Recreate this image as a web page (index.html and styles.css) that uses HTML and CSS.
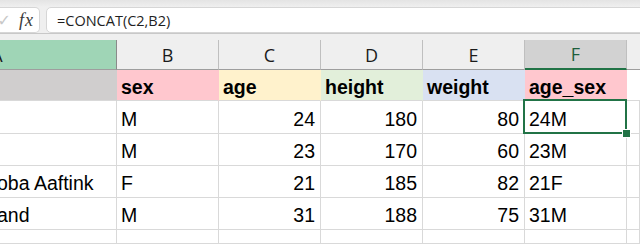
FILE: index.html
```html
<!DOCTYPE html>
<html lang="en">
<head>
    <meta charset="UTF-8">
    <title>Sheet - CONCAT</title>
    <link rel="stylesheet" href="styles.css">
</head>
<body>
    <div class="formula-bar">
        <div class="fx-box">
            <span class="check">&#10003;</span>
            <span class="fx">fx</span>
        </div>
        <div class="formula-input">=CONCAT(C2,B2)</div>
    </div>

    <div class="col-heads">
        <div class="col-head col-a">A</div>
        <div class="col-head">B</div>
        <div class="col-head">C</div>
        <div class="col-head">D</div>
        <div class="col-head">E</div>
        <div class="col-head selected">F</div>
        <div class="col-head last"></div>
    </div>

    <div class="grid">
        <!-- row 1: headings -->
        <div class="cell head fill-gray"></div>
        <div class="cell head fill-pink">sex</div>
        <div class="cell head fill-yellow">age</div>
        <div class="cell head fill-green">height</div>
        <div class="cell head fill-blue">weight</div>
        <div class="cell head fill-pink">age_sex</div>
        <div class="cell head blank"></div>

        <!-- row 2 -->
        <div class="cell name"></div>
        <div class="cell">M</div>
        <div class="cell num">24</div>
        <div class="cell num">180</div>
        <div class="cell num">80</div>
        <div class="cell active">24M</div>
        <div class="cell"></div>

        <!-- row 3 -->
        <div class="cell name"></div>
        <div class="cell">M</div>
        <div class="cell num">23</div>
        <div class="cell num">170</div>
        <div class="cell num">60</div>
        <div class="cell">23M</div>
        <div class="cell"></div>

        <!-- row 4 -->
        <div class="cell name">oba Aaftink</div>
        <div class="cell">F</div>
        <div class="cell num">21</div>
        <div class="cell num">185</div>
        <div class="cell num">82</div>
        <div class="cell">21F</div>
        <div class="cell"></div>

        <!-- row 5 -->
        <div class="cell name">and</div>
        <div class="cell">M</div>
        <div class="cell num">31</div>
        <div class="cell num">188</div>
        <div class="cell num">75</div>
        <div class="cell">31M</div>
        <div class="cell"></div>

        <!-- row 6 -->
        <div class="cell name"></div>
        <div class="cell"></div>
        <div class="cell"></div>
        <div class="cell"></div>
        <div class="cell"></div>
        <div class="cell"></div>
        <div class="cell"></div>
    </div>
</body>
</html>
```

FILE: styles.css
```css
* {
    box-sizing: border-box;
}

body {
    margin: 0;
    width: 640px;
    height: 244px;
    overflow: hidden;
    background: #ffffff;
    font-family: 'Liberation Sans', Arial, sans-serif;
}

/* Formula bar */
.formula-bar {
    height: 34px;
    padding-top: 7px;
    display: flex;
    gap: 6px;
    background: linear-gradient(#e4e4e4, #efefef 7px, #efefef);
    border-bottom: 1px solid #c8c8c8;
    overflow: hidden;
}

.fx-box {
    width: 40px;
    height: 26px;
    flex: none;
    display: flex;
    align-items: center;
    justify-content: flex-end;
    gap: 8px;
    padding-right: 5px;
    background: #ffffff;
    border: 1px solid #d6d6d6;
    border-left: none;
    border-radius: 0 5px 5px 0;
}

.check {
    font-family: 'DejaVu Sans', sans-serif;
    font-size: 16px;
    color: #c8c8c8;
    margin-left: -8px;
}

.fx {
    font-family: 'Liberation Serif', serif;
    font-style: italic;
    font-size: 18px;
    color: #3a3a3a;
    letter-spacing: 1px;
}

.formula-input {
    flex: 1;
    height: 26px;
    margin-right: -6px;
    padding: 3px 0 0 10px;
    background: #ffffff;
    border: 1px solid #d6d6d6;
    border-radius: 5px 0 0 5px;
    font-family: 'Open Sans', sans-serif;
    font-size: 14.5px;
    color: #1f1f1f;
}

/* Column letters */
.col-heads {
    display: grid;
    grid-template-columns: 117px repeat(5, 102px) 1fr;
    padding-top: 6px;
    background: #efefef;
}

.col-head {
    height: 30px;
    padding-top: 4px;
    text-align: center;
    font-family: 'Open Sans', sans-serif;
    font-size: 18px;
    line-height: 22px;
    color: #1b1b1b;
    border-right: 1px solid #bfbfbf;
    border-bottom: 1px solid #9e9e9e;
}

.col-head.col-a {
    background: #9fd5b6;
    text-indent: -122px;
    border-right-color: #8a8a8a;
}

.col-head.selected {
    background: #d2d2d2;
    color: #1d5e3c;
    border-bottom: 2px solid #217346;
    padding-top: 3px;
}

.col-head.last {
    border-right: none;
}

/* Cells */
.grid {
    display: grid;
    grid-template-columns: 117px repeat(5, 102px) 1fr;
    grid-template-rows: 31px 33px 32px 32px 32px 14px;
}

.cell {
    display: flex;
    align-items: flex-end;
    padding: 0 4px 2px 4px;
    font-size: 19.5px;
    line-height: 24px;
    color: #000000;
    white-space: nowrap;
    overflow: hidden;
    border-right: 1px solid #d9d9d9;
    border-bottom: 1px solid #d9d9d9;
}

.cell.num {
    justify-content: flex-end;
    padding-right: 5px;
}

.cell.name {
    padding-left: 0;
    text-indent: -3px;
}

.cell.head {
    font-weight: bold;
    padding-bottom: 1px;
    border-right-color: transparent;
    border-bottom-color: #d9d9d9;
}

.cell.head.blank {
    border-right: none;
}

.fill-gray { background: #d0cece; }
.fill-pink { background: #ffc7ce; }
.fill-yellow { background: #fff2cc; }
.fill-green { background: #e2efda; }
.fill-blue { background: #d9e1f2; }

/* Active cell */
.cell.active {
    position: relative;
    overflow: visible;
}

.cell.active::after {
    content: "";
    position: absolute;
    top: -2px;
    left: -2px;
    right: -1px;
    bottom: -1px;
    border: 2px solid #217346;
}

.cell.active::before {
    content: "";
    position: absolute;
    right: -5px;
    bottom: -5px;
    width: 7px;
    height: 7px;
    background: #217346;
    border: 1px solid #ffffff;
    z-index: 1;
}
```
